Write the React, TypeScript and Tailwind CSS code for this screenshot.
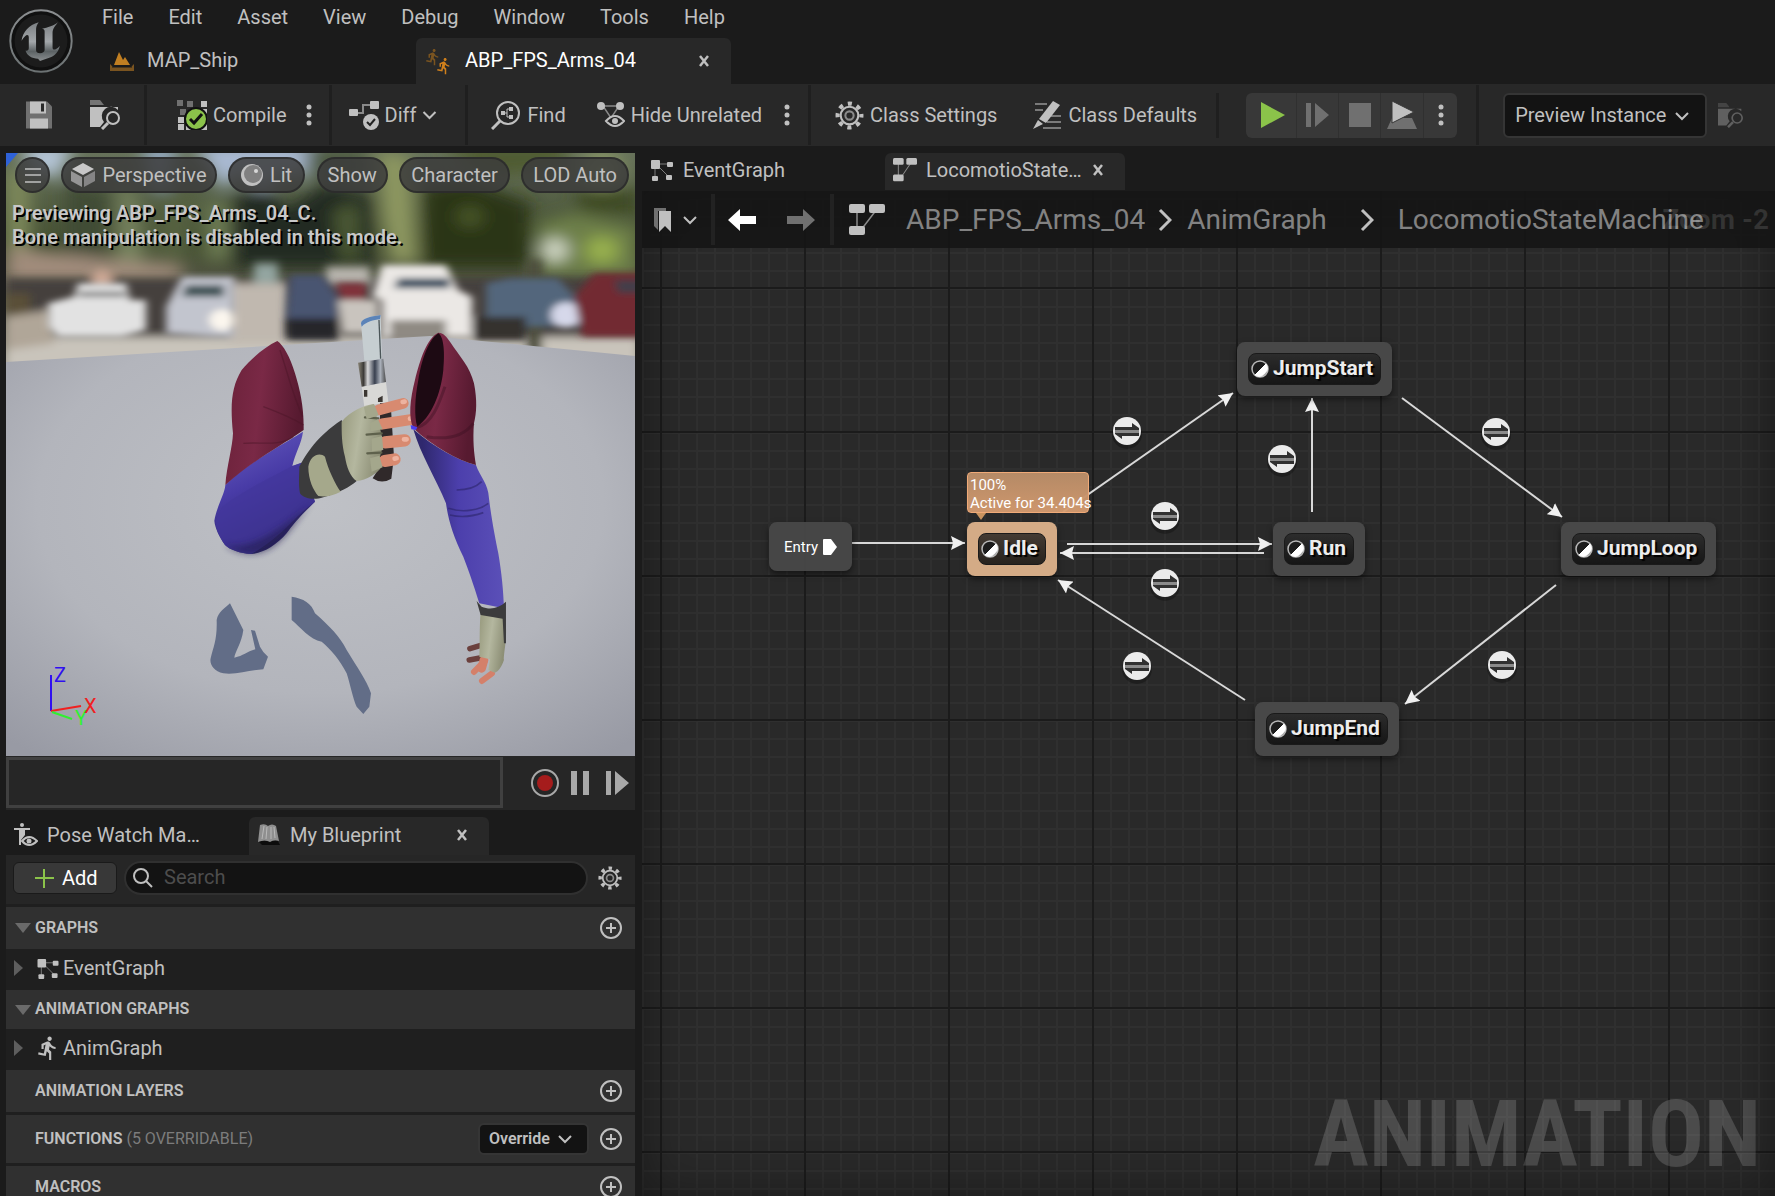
import * as React from "react";
import { MdDirectionsRun } from "react-icons/md";

type IconProps = { className?: string };

function UnrealLogo() {
  return (
    <svg viewBox="28 26 194 194" className="h-16 w-16" aria-label="Unreal">
      <defs>
        <linearGradient id="ring" x1="0" y1="0" x2="0" y2="1">
          <stop offset="0" stopColor="#8b8e90" />
          <stop offset="1" stopColor="#6c7273" />
        </linearGradient>
        <linearGradient id="letter" x1="0" y1="0" x2="0" y2="1">
          <stop offset="0" stopColor="#7b7f82" />
          <stop offset="0.5" stopColor="#a3a7aa" />
          <stop offset="0.75" stopColor="#5c6264" />
          <stop offset="1" stopColor="#8b8f91" />
        </linearGradient>
      </defs>
      <circle cx="125" cy="123" r="93" fill="#101010" stroke="url(#ring)" strokeWidth="6" />
      <circle cx="125" cy="123" r="80" fill="#1c1c1c" />
      <path
        fill="url(#letter)"
        d="M66 122C70 95 88 74 118 66C112 74 110 80 110 90V150C110 157 115 160 122 160C130 160 136 155 136 150V94C136 88 133 87 128 86C145 82 165 76 176 66C170 76 160 84 160 98V142C160 152 168 152 182 138C178 155 168 168 150 174L122 184L116 177C98 176 82 168 78 152C84 154 88 150 88 144V112C88 100 78 102 66 122Z"
      />
    </svg>
  );
}

function MapIcon({ className }: IconProps) {
  return (
    <svg viewBox="0 0 24 20" className={className}>
      <path d="M4 14L9 1L13 9L15 6L20 14Z" fill="#c17f22" />
      <path d="M0 13L3 16H21L24 13V20H0Z" fill="#7a5420" />
      <path d="M2 16H22" stroke="#1b1b1b" strokeWidth="1" />
    </svg>
  );
}

function SaveIcon() {
  return (
    <svg viewBox="0 0 26 27" className="h-7 w-[26px]">
      <path d="M0 0H21L26 5V27H0Z" fill="#707070" />
      <path d="M4 0H20V12H4Z" fill="#c0c0c0" />
      <path d="M15 2H18V10H15Z" fill="#282828" />
      <path d="M4 17H22V27H4Z" fill="#c0c0c0" />
    </svg>
  );
}

function BrowseIcon({ className }: IconProps) {
  return (
    <svg viewBox="0 0 30 30" className={className}>
      <path d="M0 5V0H10L14 5Z" fill="currentColor" opacity="0.5" />
      <path d="M0 7H28V10A9 9 0 0 0 14 22L10 27H0Z" fill="currentColor" />
      <circle cx="23" cy="18" r="6" fill="none" stroke="currentColor" strokeWidth="2" />
      <path d="M18 23L12 29" stroke="currentColor" strokeWidth="3" />
    </svg>
  );
}

function CompileIcon() {
  return (
    <svg viewBox="0 0 30 30" className="h-[30px] w-[30px]">
      <path d="M0 0H6V6H0ZM10 1H16V7H10ZM3 9H9V15H3Z" fill="#707070" />
      <path d="M24 1H30V7H24ZM12 9H18V15H12ZM24 9H30V15H24ZM1 17H7V23H1ZM1 24H7V30H1ZM9 24H15V30H9ZM24 24H30V30H24Z" fill="#c0c0c0" />
      <circle cx="19" cy="19" r="11" fill="#8bc34a" stroke="#111" strokeWidth="2" />
      <path d="M13 19L17 23L25 14" fill="none" stroke="#111" strokeWidth="3" />
    </svg>
  );
}

function DiffIcon() {
  return (
    <svg viewBox="0 0 30 29" className="h-[29px] w-[30px]">
      <path d="M8 12H14V4H22" fill="none" stroke="#8a8a8a" strokeWidth="2" />
      <rect x="0" y="8" width="9" height="7" rx="1" fill="#c0c0c0" />
      <rect x="21" y="0" width="9" height="8" rx="1" fill="#c0c0c0" />
      <circle cx="22" cy="21" r="8" fill="#c0c0c0" />
      <path d="M18 21L21 24L26 18" fill="none" stroke="#222" strokeWidth="2" />
    </svg>
  );
}

function FindIcon() {
  return (
    <svg viewBox="0 0 30 30" className="h-[30px] w-[30px]">
      <circle cx="17" cy="13" r="11" fill="none" stroke="#c0c0c0" strokeWidth="2" />
      <path d="M9 21L1 29" stroke="#c0c0c0" strokeWidth="3" />
      <path d="M14 13H16M20 9H16V17H20" fill="none" stroke="#c0c0c0" strokeWidth="1" />
      <path d="M10 11H14V15H10ZM18 7H22V11H18ZM18 15H22V19H18Z" fill="#c0c0c0" />
    </svg>
  );
}

function HideIcon() {
  return (
    <svg viewBox="0 0 28 26" className="h-[26px] w-7">
      <path d="M6 4H22L14 16Z" fill="none" stroke="#8a8a8a" strokeWidth="1.5" />
      <circle cx="4" cy="4" r="4" fill="#c0c0c0" />
      <circle cx="23" cy="4" r="4" fill="#c0c0c0" />
      <path d="M9 19Q18 9 27 19Q18 29 9 19Z" fill="#282828" stroke="#c0c0c0" strokeWidth="2" />
      <circle cx="18" cy="19" r="3" fill="#c0c0c0" />
    </svg>
  );
}

function GearIcon({ className }: IconProps) {
  return (
    <svg viewBox="0 0 28 28" className={className} fill="none" stroke="#c0c0c0">
      <circle cx="14" cy="14" r="8.5" strokeWidth="2" />
      <circle cx="14" cy="14" r="4" strokeWidth="2" stroke="#8a8a8a" />
      <circle cx="14" cy="14" r="11.5" strokeWidth="4" strokeDasharray="4 5.03" strokeDashoffset="2" />
    </svg>
  );
}

function DefaultsIcon() {
  return (
    <svg viewBox="0 0 29 28" className="h-7 w-[29px]">
      <path d="M2 3H14M2 9H10M18 15H28M14 21H28M10 27H28" stroke="#7a7a7a" strokeWidth="2" />
      <path d="M20 0L27 4L13 22L6 18Z" fill="#c0c0c0" />
      <path d="M5 19L10 23L0 28Z" fill="#c0c0c0" />
    </svg>
  );
}

function GraphIcon({ className }: IconProps) {
  return (
    <svg viewBox="0 0 22 22" className={className}>
      <path d="M5 5H18M4 5V18M6 6L18 18" stroke="#7d7d7d" strokeWidth="1" />
      <rect x="0" y="1" width="9" height="9" rx="1" fill="#c0c0c0" />
      <rect x="16" y="3" width="6" height="5" rx="1" fill="#c0c0c0" />
      <rect x="1" y="17" width="6" height="5" rx="1" fill="#c0c0c0" />
      <rect x="15" y="16" width="6" height="5" rx="1" fill="#c0c0c0" />
    </svg>
  );
}

function StateMachineIcon({ className }: IconProps) {
  return (
    <svg viewBox="0 0 36 32" preserveAspectRatio="none" className={className}>
      <path d="M8 5V26M28 5L12 26" stroke="#8a8a8a" strokeWidth="1.5" />
      <rect x="0" y="0" width="16" height="9" rx="2" fill="#c0c0c0" />
      <rect x="20" y="0" width="16" height="9" rx="2" fill="#c0c0c0" />
      <rect x="0" y="22" width="16" height="9" rx="2" fill="#c0c0c0" />
    </svg>
  );
}

function PoseIcon() {
  return (
    <svg viewBox="0 0 24 24" className="h-6 w-6">
      <circle cx="8" cy="2" r="2" fill="#c0c0c0" />
      <path d="M0 5H16V7H11V12L7 17V22H5V7H0Z" fill="#c0c0c0" />
      <path d="M8 18Q15 10 23 18Q15 26 8 18Z" fill="#1b1b1b" stroke="#c0c0c0" strokeWidth="2" />
      <circle cx="15" cy="18" r="2.5" fill="#c0c0c0" />
    </svg>
  );
}

function BookIcon() {
  return (
    <svg viewBox="0 0 24 24" className="h-6 w-6">
      <path d="M1 18H21L23 22H5Z" fill="#0c0c0c" />
      <path d="M3 2Q8 0 11 3Q15 0 19 3L22 18Q17 16 13 19Q8 16 1 19Z" fill="#8f8f8f" />
      <path d="M7 3L5 16M10 4L9 16M14 4V16M17 4L18 15" stroke="#b9b9b9" strokeWidth="1" />
    </svg>
  );
}

function Chevron({ className }: IconProps) {
  return (
    <svg viewBox="0 0 14 10" className={className} fill="none" stroke="currentColor" strokeWidth="2">
      <path d="M1 2L7 8L13 2" />
    </svg>
  );
}

function CloseIcon() {
  return (
    <svg viewBox="0 0 10 12" className="h-3 w-[10px]" stroke="#c0c0c0" strokeWidth="2.5">
      <path d="M1 1L9 11M9 1L1 11" />
    </svg>
  );
}

function Dots() {
  return (
    <svg viewBox="0 0 6 22" className="h-[22px] w-[6px]" fill="#c0c0c0">
      <circle cx="3" cy="3" r="2.5" />
      <circle cx="3" cy="11" r="2.5" />
      <circle cx="3" cy="19" r="2.5" />
    </svg>
  );
}

function PlusCircle() {
  return (
    <svg viewBox="0 0 22 22" className="h-[22px] w-[22px]" fill="none" stroke="#c0c0c0" strokeWidth="2">
      <circle cx="11" cy="11" r="10" />
      <path d="M11 6V16M6 11H16" />
    </svg>
  );
}

function ToolButton({ icon, label }: { icon: React.ReactNode; label: string }) {
  return (
    <button className="flex items-center gap-[6px] whitespace-nowrap">
      {icon}
      <span>{label}</span>
    </button>
  );
}

const menus = ["File", "Edit", "Asset", "View", "Debug", "Window", "Tools", "Help"];

function Header() {
  return (
    <header className="flex h-[84px]">
      <div className="w-[98px] shrink-0 pt-[9px] pl-[9px]">
        <UnrealLogo />
      </div>
      <div className="flex min-w-0 flex-1 flex-col justify-between">
        <nav className="-ml-[14px] flex h-[34px] items-center">
          {menus.map((m) => (
            <button key={m} className="pr-[17px] pl-[18px]">
              {m}
            </button>
          ))}
        </nav>
        <div className="flex h-[46px] gap-[3px]" role="tablist">
          <div role="tab" className="flex w-[315px] items-center gap-[13px] pb-3 pl-3">
            <MapIcon className="mt-3 h-5 w-6" />
            <span className="mt-[10px]">MAP_Ship</span>
          </div>
          <div
            role="tab"
            aria-selected="true"
            className="flex w-[315px] items-center gap-[13px] rounded-t-md bg-[#282828] pr-[22px] pl-3 text-white"
          >
            <span className="relative h-6 w-6 shrink-0">
              <MdDirectionsRun className="absolute -top-px -left-1 h-[18px] w-[18px] text-[#7a5420]" />
              <MdDirectionsRun className="absolute top-2 left-[7px] h-[18px] w-[18px] text-[#d0801c]" />
            </span>
            <span className="flex-1 pb-[2px]">ABP_FPS_Arms_04</span>
            <button aria-label="Close">
              <CloseIcon />
            </button>
          </div>
        </div>
      </div>
    </header>
  );
}

function Toolbar() {
  return (
    <div className="flex h-[64px] items-center border-b-2 border-[#1b1b1b] bg-[#282828]">
      <div className="flex h-[60px] items-center gap-[38px] border-r-3 border-[#1f1f1f] pr-6 pl-[26px]">
        <button aria-label="Save">
          <SaveIcon />
        </button>
        <button aria-label="Browse">
          <BrowseIcon className="h-[30px] w-[30px]" />
        </button>
      </div>
      <div className="flex h-[60px] items-center gap-[19px] border-r-3 border-[#1f1f1f] pr-[17px] pl-[30px]">
        <ToolButton icon={<CompileIcon />} label="Compile" />
        <button aria-label="Compile options">
          <Dots />
        </button>
      </div>
      <div className="flex h-[60px] items-center gap-[6px] border-r-3 border-[#1f1f1f] pr-7 pl-[17px]">
        <ToolButton icon={<DiffIcon />} label="Diff" />
        <Chevron className="h-[10px] w-[15px]" />
      </div>
      <div className="flex h-[60px] items-center border-r-3 border-[#1f1f1f] pr-[18px] pl-[23px]">
        <ToolButton icon={<FindIcon />} label="Find" />
        <div className="ml-[31px] flex gap-[22px]">
          <ToolButton icon={<HideIcon />} label="Hide Unrelated" />
          <button aria-label="Hide options">
            <Dots />
          </button>
        </div>
      </div>
      <div className="flex h-[45px] items-center gap-9 border-r-3 border-[#1f1f1f] pr-[19px] pl-6">
        <ToolButton icon={<GearIcon className="h-[29px] w-[29px]" />} label="Class Settings" />
        <ToolButton icon={<DefaultsIcon />} label="Class Defaults" />
      </div>
      <div className="flex h-[60px] items-center border-r-3 border-[#1f1f1f] pr-[19px] pl-[27px]">
        <div className="grid h-[45px] grid-cols-[51px_42px_42px_43px_33px] divide-x divide-[#303030] rounded-md bg-[#383838]">
          <button aria-label="Play" className="flex items-center justify-center pl-1">
            <svg viewBox="0 0 24 26" className="h-[26px] w-6">
              <path d="M0 0L24 13L0 26Z" fill="#8bc34a" />
            </svg>
          </button>
          <button aria-label="Step" className="flex items-center justify-center">
            <svg viewBox="0 0 24 24" className="h-6 w-6" fill="#707070">
              <path d="M0 0H5V24H0ZM9 0L23 12L9 24Z" />
            </svg>
          </button>
          <button aria-label="Stop" className="flex items-center justify-center">
            <span className="h-6 w-[22px] bg-[#707070]" />
          </button>
          <button aria-label="Eject" className="flex items-center justify-center">
            <svg viewBox="0 0 30 28" className="h-7 w-[30px]">
              <path d="M5 17H25L30 28H0Z" fill="#707070" />
              <path d="M5 0L27 11L5 22Z" fill="#c0c0c0" stroke="#383838" />
            </svg>
          </button>
          <button aria-label="Play options" className="flex items-center justify-center">
            <Dots />
          </button>
        </div>
      </div>
      <div className="flex items-center gap-[11px] pl-6">
        <div className="relative">
          <select
            aria-label="Debug object"
            className="h-[45px] w-[204px] appearance-none rounded-md border-2 border-[#353535] bg-[#131313] pl-[10px]"
          >
            <option>Preview Instance</option>
          </select>
          <Chevron className="pointer-events-none absolute top-[18px] right-[18px] h-[10px] w-[14px]" />
        </div>
        <button aria-label="Browse instance">
          <BrowseIcon className="h-[25px] w-[25px] text-[#606060]" />
        </button>
      </div>
    </div>
  );
}

function Scene() {
  return (
    <svg
      viewBox="6 153 629 603"
      preserveAspectRatio="xMidYMid slice"
      className="absolute inset-0 h-full w-full"
    >
      <defs>
        <linearGradient id="trees" x1="0" y1="0" x2="0" y2="1">
          <stop offset="0" stopColor="#66715a" />
          <stop offset="0.4" stopColor="#434e30" />
          <stop offset="0.6" stopColor="#565648" />
          <stop offset="1" stopColor="#a8a396" />
        </linearGradient>
        <radialGradient id="floor" cx="0.5" cy="0.4" r="0.75">
          <stop offset="0" stopColor="#bfc1c6" />
          <stop offset="0.6" stopColor="#b3b5bc" />
          <stop offset="1" stopColor="#989aa4" />
        </radialGradient>
        <linearGradient id="sleeve" x1="0" y1="0" x2="1" y2="0.2">
          <stop offset="0" stopColor="#6a2139" />
          <stop offset="0.5" stopColor="#7a2946" />
          <stop offset="1" stopColor="#571a30" />
        </linearGradient>
        <linearGradient id="fore" x1="0" y1="0" x2="0.4" y2="1">
          <stop offset="0" stopColor="#6a60c4" />
          <stop offset="0.5" stopColor="#483ba6" />
          <stop offset="1" stopColor="#2a2460" />
        </linearGradient>
        <linearGradient id="lower" x1="0" y1="0" x2="1" y2="0">
          <stop offset="0.1" stopColor="#2f286e" />
          <stop offset="0.5" stopColor="#4c3fac" />
          <stop offset="1" stopColor="#5b50b8" />
        </linearGradient>
        <linearGradient id="metal" x1="0" y1="0" x2="1" y2="0">
          <stop offset="0" stopColor="#8b8678" />
          <stop offset="0.2" stopColor="#3c3a38" />
          <stop offset="0.35" stopColor="#d8d8da" />
          <stop offset="0.6" stopColor="#39404f" />
          <stop offset="0.8" stopColor="#aab0ba" />
          <stop offset="1" stopColor="#4a4a4a" />
        </linearGradient>
        <linearGradient id="glove" x1="0" y1="0" x2="1" y2="0.3">
          <stop offset="0" stopColor="#97997d" />
          <stop offset="0.5" stopColor="#b4b79f" />
          <stop offset="1" stopColor="#8d8f76" />
        </linearGradient>
        <filter id="far" x="-20%" y="-20%" width="140%" height="140%">
          <feGaussianBlur stdDeviation="22" />
        </filter>
        <filter id="near" x="-20%" y="-20%" width="140%" height="140%">
          <feGaussianBlur stdDeviation="10" />
        </filter>
        <filter id="soft" x="-20%" y="-20%" width="140%" height="140%">
          <feGaussianBlur stdDeviation="12" />
        </filter>
      </defs>

      {/* blurred car park behind the floor */}
      <rect x="6" y="153" width="629" height="230" fill="url(#trees)" />
      <g transform="translate(6 150) scale(.4 .3333)">
        <g filter="url(#far)">
          <path d="M40 -20H170L130 90L60 60Z" fill="#b4c4d6" />
          <path d="M470 -20H770L740 90L690 60L640 150L600 60L540 120Z" fill="#a9b9d2" />
          <path d="M340 -20H430L400 130L360 100Z" fill="#91a5ba" />
          <path d="M0 60H60V300H0Z" fill="#7f8a5c" />
          <path d="M150 100L260 130L240 340H150Z" fill="#414b35" />
          <path d="M290 60L330 160L350 340H270Z" fill="#77835f" />
          <path d="M380 130L470 110L450 340H370Z" fill="#55613f" />
          <path d="M560 150L650 110L700 180L800 100L920 140V350H560Z" fill="#242c20" />
          <path d="M500 160H560V330H500Z" fill="#6d7b52" />
          <path d="M820 180L880 160V330H840Z" fill="#4e5b35" />
          <path d="M930 0L1010 20L1030 340H960L940 200Z" fill="#8d9760" />
          <path d="M740 0H900V90H780Z" fill="#4b583f" />
          <path d="M1040 110L1150 90L1310 160V350H1040Z" fill="#2b3619" />
          <path d="M1080 -20H1400V60L1200 80Z" fill="#4f5c30" />
          <path d="M1330 220L1420 190L1580 230V380H1330Z" fill="#6d7f48" />
          <path d="M1420 120H1580V190H1440Z" fill="#3c4922" />
          <circle cx="1490" cy="60" r="55" fill="#8c9a66" />
          <circle cx="1370" cy="300" r="34" fill="#d6dccb" />
          <circle cx="1490" cy="300" r="40" fill="#9ab34d" />
          <circle cx="1160" cy="200" r="30" fill="#4c5a2c" />
          <path d="M0 290L200 320L440 350V400H0Z" fill="#a18c7b" />
        </g>
        <g filter="url(#soft)">
          <path d="M0 385H1580V580H0Z" fill="#45413d" />
          <path d="M0 430H60V520L0 540Z" fill="#5a5038" />
          <path d="M0 560H1580V680H0Z" fill="#c9c4bb" />
          <path d="M560 400H700V580H560Z" fill="#c0b8af" />
          <path d="M0 500L110 480L120 580L0 600Z" fill="#b0a698" />
          <circle cx="240" cy="385" r="26" fill="#cda895" />
          <path d="M620 340H680V400H620Z" fill="#93a5a0" />
          <path d="M800 350H910V400H800Z" fill="#b8b5ae" />
          <path d="M1300 330H1340V620H1300Z" fill="#4d503e" />
        </g>
        <g filter="url(#near)">
          <path d="M180 400H300L310 450H350V540L290 560H130L105 530V460L170 440Z" fill="#e2e2e2" />
          <path d="M180 425H300V440H180Z" fill="#737373" />
          <path d="M440 380H570V560H520L400 550V470Z" fill="#c2c5ce" />
          <path d="M450 405H545V440H440Z" fill="#3f5257" />
          <circle cx="540" cy="510" r="32" fill="#fbf6ee" />
          <path d="M710 375H790L830 440V510H700Z" fill="#4a5571" />
          <path d="M700 505H830V570H700Z" fill="#26262c" />
          <path d="M825 400H900V450H840Z" fill="#80323a" />
          <path d="M830 450H930V550H840Z" fill="#c9c4be" />
          <path d="M940 345H1100L1130 420L1165 440V560H940V450L915 440Z" fill="#ebe8e5" />
          <path d="M980 385H1110V415H970Z" fill="#33465b" />
          <path d="M960 510H1100V570H960Z" fill="#8f8a83" />
          <path d="M1200 400L1260 385H1380L1430 450V530H1200Z" fill="#52667b" />
          <path d="M1170 500H1300V570H1170Z" fill="#35322f" />
          <circle cx="1400" cy="495" r="38" fill="#d6d8ea" />
          <path d="M1470 370H1600V560H1440L1420 440Z" fill="#722b33" />
          <path d="M1520 390H1600V430H1530Z" fill="#433e4a" />
        </g>
      </g>

      <path d="M6 362L430 336L635 356V756H6Z" fill="url(#floor)" />

      <g transform="translate(180 290) scale(.3333)">
        <g fill="#626d87">
          <path d="M150 940L190 1020C185 1060 165 1085 163 1103C190 1098 200 1085 226 1078L213 1020L225 1022L240 1070L250 1086L264 1100L250 1138C210 1140 170 1155 130 1150C100 1145 88 1120 92 1105C100 1070 112 1050 110 990C115 965 135 955 150 940Z" />
          <path d="M335 920C370 925 395 940 405 970C450 1010 480 1040 500 1080C530 1130 560 1170 573 1210L568 1250L550 1272L530 1250C520 1230 510 1180 500 1150C480 1110 450 1075 425 1055C390 1050 360 1010 335 990Z" />
        </g>

        {/* left arm */}
        <path d="M369 425C365 460 345 490 337 528L365 518L405 635C370 670 340 700 320 730C290 765 250 790 215 792C180 790 150 780 135 765C118 740 105 715 103 692C110 650 135 610 136 585C200 520 290 475 369 425Z" fill="url(#fore)" />
        <path d="M128 650C190 600 280 560 337 528L365 518L405 635C340 680 320 730 215 792C180 790 150 780 135 765C118 740 105 715 108 690Z" fill="#43379c" opacity="0.75" />
        <path d="M135 765C200 780 280 740 395 638C340 700 300 790 215 792C180 790 150 780 135 765Z" fill="#211c50" opacity="0.6" filter="url(#near)" />
        <path d="M292 153C310 165 330 200 345 250C360 300 372 350 371 420C300 470 220 510 136 585C140 530 158 470 159 430C150 340 155 290 185 240C215 205 255 170 292 153Z" fill="url(#sleeve)" />
        <path d="M250 350C290 365 330 380 371 405M190 460C240 455 300 470 340 440M300 180C320 240 340 320 368 380" stroke="#4b1528" strokeWidth="4" fill="none" opacity="0.5" />

        {/* knife */}
        <path d="M543 100C545 85 570 80 602 75L606 208L553 212Z" fill="#c6ced1" />
        <path d="M543 100C545 85 570 80 602 75L600 88C580 90 560 95 545 110Z" fill="#5b83b8" />
        <path d="M597 90L602 206" stroke="#4b5558" strokeWidth="4" />
        <path d="M545 290L618 276L625 335L553 350Z" fill="#d8d8d6" />
        <path d="M534 218L610 206L618 276L545 290Z" fill="url(#metal)" />
        <path d="M552 300H562V320H552ZM594 325L608 317V336H594Z" fill="#3b3632" />
        <path d="M600 340H632L642 500L634 566Q605 584 578 565L600 530Z" fill="#30292a" />

        {/* left glove */}
        <path d="M358 530C380 490 410 440 485 390L530 573C510 590 480 608 430 622C400 632 370 625 360 610C355 580 358 555 358 530Z" fill="#3b3b3c" />
        <path d="M485 395C510 365 550 345 582 342L590 380L600 415L606 440L608 470L600 500L605 530C590 552 560 570 530 573C510 560 500 530 495 500C485 460 485 430 485 395Z" fill="url(#glove)" />
        <path d="M385 530C390 495 420 485 435 500C445 540 465 580 482 605C460 617 435 622 415 618C400 600 385 570 385 530Z" fill="#a5a88b" />
        <path d="M595 385L555 382M605 430L560 434M604 488L562 490" stroke="#5e614c" strokeWidth="7" strokeLinecap="round" />
        <g stroke="#d88a70" strokeLinecap="round">
          <path d="M596 360L670 340" strokeWidth="32" />
          <path d="M606 402L692 389" strokeWidth="33" />
          <path d="M615 457L674 451" strokeWidth="37" />
          <path d="M614 513L644 508" strokeWidth="36" />
        </g>
        <g stroke="#edb3a0" strokeLinecap="round" strokeWidth="14">
          <path d="M668 336L674 335M690 386L698 386M672 448L680 448M644 506L650 505" />
        </g>
        <path d="M552 352L582 342L596 376L560 388ZM570 400L594 388L608 418L572 424ZM575 446L606 438L610 480L576 484ZM570 505L598 497L608 532L575 545Z" fill="#a4a78c" />

        {/* right arm */}
        <path d="M700 418C760 470 830 510 888 525C900 560 925 580 927 625C935 690 945 740 955 790C965 850 970 900 972 955L898 940C880 880 865 840 850 800C820 740 805 690 798 640C770 570 720 490 700 418Z" fill="url(#lower)" />
        <path d="M805 655C850 670 900 660 925 640M810 675C850 685 890 675 910 668M830 600C870 600 895 585 905 575" stroke="#231d5c" strokeWidth="5" fill="none" opacity="0.5" />
        <path d="M775 128C790 128 800 140 810 155C840 200 870 230 882 280C892 330 890 370 882 400C878 450 882 490 888 525C830 510 760 470 700 415C685 380 690 330 705 270C720 210 740 145 775 128Z" fill="url(#sleeve)" />
        <path d="M775 130C792 140 795 190 790 240C785 290 765 370 712 410C702 380 705 320 715 270C725 210 745 150 775 130Z" fill="#1d0a13" />
        <path d="M712 412C760 400 780 330 795 290M740 440C800 450 850 440 880 400" stroke="#3a0f20" strokeWidth="9" fill="none" opacity="0.4" />
        <path d="M692 405L712 412L708 420L694 418Z" fill="#4b3df0" />

        {/* right hand */}
        <g strokeLinecap="round" fill="none">
          <path d="M900 1067L870 1076M900 1104L868 1110" stroke="#6b403d" strokeWidth="17" />
          <path d="M915 1112L882 1146M936 1150L906 1173" stroke="#d4806a" strokeWidth="18" />
          <path d="M912 1110L905 1135" stroke="#d4806a" strokeWidth="26" />
        </g>
        <path d="M902 970L975 980C985 1040 970 1090 972 1110C965 1130 955 1145 945 1148L925 1140L930 1108L898 1100C900 1050 898 1010 902 970Z" fill="url(#glove)" />
        <path d="M890 933L905 950C930 960 955 956 978 935V1060L972 1060L968 986L902 975Z" fill="#3b3b3c" />
      </g>

      {/* axis gizmo */}
      <g strokeWidth="2" fontFamily="Roboto, sans-serif" fontSize="20">
        <path d="M51 711V675" stroke="#3010f0" />
        <path d="M51 711L81 706" stroke="#f02020" />
        <path d="M52 712L72 719" stroke="#30f030" />
        <text x="54" y="682" fill="#3010f0">Z</text>
        <text x="75" y="725" fill="#30f030">Y</text>
        <text x="84" y="713" fill="#f02020">X</text>
      </g>
      <path d="M6 153H18L6 167Z" fill="#2f62d8" />
    </svg>
  );
}

function Pill({ children, className }: { children: React.ReactNode; className: string }) {
  return (
    <button
      className={`flex h-9 items-center gap-[7px] rounded-full border-2 border-[#262626]/70 bg-[#3c3c3c]/85 whitespace-nowrap ${className}`}
    >
      {children}
    </button>
  );
}

function Viewport() {
  return (
    <section className="relative h-[603px] shrink-0 overflow-hidden">
      <Scene />
      <div className="relative flex justify-between py-1 pr-[6px] pl-[9px]">
        <Pill className="w-[35px] justify-center">
          <svg viewBox="0 0 16 16" className="h-4 w-4 shrink-0" stroke="#c0c0c0" strokeWidth="1.5" aria-label="Options">
            <path d="M0 2H16M0 8H16M0 15H16" />
          </svg>
        </Pill>
        <Pill className="px-2">
          <svg viewBox="0 0 24 24" className="h-6 w-6">
            <path d="M12 0L23 6L12 12L1 6Z" fill="#c8c8c8" />
            <path d="M0 8L11 14V24L0 18Z" fill="#959595" />
            <path d="M24 8L13 14V24L24 18Z" fill="#858585" />
          </svg>
          Perspective
        </Pill>
        <Pill className="px-[11px]">
          <svg viewBox="0 0 22 22" className="h-[22px] w-[22px]">
            <circle cx="11" cy="11" r="11" fill="#c0c0c0" />
            <circle cx="12" cy="10" r="9" fill="#808080" />
            <circle cx="15" cy="7" r="2" fill="#d8d8d8" />
          </svg>
          Lit
        </Pill>
        <Pill className="px-[9px]">Show</Pill>
        <Pill className="px-[10px]">Character</Pill>
        <Pill className="px-[10px]">LOD Auto</Pill>
      </div>
      <p className="relative pt-1 pl-[6px] leading-6 font-semibold text-[#c8c8c8] [text-shadow:2px_2px_0_#000]">
        Previewing ABP_FPS_Arms_04_C.
        <br />
        Bone manipulation is disabled in this mode.
      </p>
    </section>
  );
}

function Timeline() {
  return (
    <div className="flex h-[54px] shrink-0 items-start bg-[#262626] pt-px">
      <div className="h-[51px] flex-1 border-3 border-[#404040]" />
      <div className="flex h-[52px] items-center gap-3 pr-[6px] pl-7">
        <button aria-label="Record">
          <svg viewBox="0 0 28 28" className="h-7 w-7">
            <circle cx="14" cy="14" r="13" fill="none" stroke="#a8a8a8" strokeWidth="2" />
            <circle cx="14" cy="14" r="8" fill="#a51c1c" />
          </svg>
        </button>
        <button aria-label="Pause">
          <svg viewBox="0 0 19 24" className="h-6 w-[19px]" fill="#a8a8a8">
            <path d="M0 0H6V24H0ZM12 0H18V24H12Z" />
          </svg>
        </button>
        <button aria-label="Step forward" className="pl-1">
          <svg viewBox="0 0 23 24" className="h-6 w-[23px]" fill="#a8a8a8">
            <path d="M0 0H5V24H0ZM9 0L23 12L9 24Z" />
          </svg>
        </button>
      </div>
    </div>
  );
}

function Category({
  title,
  note,
  open,
  height,
  add = true,
  children,
}: {
  title: string;
  note?: string;
  open?: boolean;
  height: string;
  add?: boolean;
  children?: React.ReactNode;
}) {
  return (
    <div className={`flex shrink-0 items-center bg-[#303030] pr-[13px] pl-[9px] ${height}`}>
      <svg viewBox="0 0 16 10" className="h-[10px] w-4">
        {open && <path d="M0 0H16L8 10Z" fill="#6a6a6a" />}
      </svg>
      <h3 className="flex-1 pb-px pl-1 text-base font-semibold text-[#c0c0c0]">
        {title} {note && <span className="font-normal text-[#7c7c7c]">{note}</span>}
      </h3>
      {children}
      {add && (
        <button aria-label={`Add ${title}`}>
          <PlusCircle />
        </button>
      )}
    </div>
  );
}

function TreeRow({ icon, label }: { icon: React.ReactNode; label: string }) {
  return (
    <div className="flex h-[41px] shrink-0 items-center bg-[#1f1f1f] pb-[3px] pl-2">
      <svg viewBox="0 0 9 16" className="h-4 w-[9px]">
        <path d="M0 0L9 8L0 16Z" fill="#5e5e5e" />
      </svg>
      <span className="ml-3 flex w-[26px] justify-center">{icon}</span>
      <span className="pl-[2px]">{label}</span>
    </div>
  );
}

function MyBlueprint() {
  return (
    <>
      <div className="flex h-[45px] shrink-0 items-end" role="tablist">
        <div role="tab" className="flex h-[38px] w-[243px] items-center gap-[9px] pb-[3px] pl-2">
          <PoseIcon />
          <span>Pose Watch Ma…</span>
        </div>
        <div
          role="tab"
          aria-selected="true"
          className="flex h-[38px] w-60 items-center gap-[9px] rounded-t-md bg-[#282828] pr-[22px] pb-[3px] pl-2"
        >
          <BookIcon />
          <span className="flex-1">My Blueprint</span>
          <button aria-label="Close My Blueprint">
            <CloseIcon />
          </button>
        </div>
      </div>
      <section className="flex min-h-0 flex-1 flex-col overflow-hidden bg-[#1f1f1f]">
        <div className="mb-[3px] flex h-[49px] shrink-0 items-center bg-[#262626] pr-[13px] pb-[3px] pl-[7px]">
          <button className="flex h-8 w-[104px] items-center gap-2 rounded-md border border-[#1a1a1a] bg-[#383838] pl-[21px] text-white">
            <svg viewBox="0 0 19 19" className="h-[19px] w-[19px]" stroke="#8bc34a" strokeWidth="2">
              <path d="M9 0V19M0 9H19" />
            </svg>
            Add
          </button>
          <label className="mr-[10px] ml-[7px] flex h-[34px] flex-1 items-center rounded-full border-2 border-[#303030] bg-[#131313] pl-[7px]">
            <svg viewBox="0 0 20 20" className="h-5 w-5" fill="none" stroke="#c0c0c0" strokeWidth="2">
              <circle cx="8" cy="8" r="7" />
              <path d="M13 13L19 19" />
            </svg>
            <input
              aria-label="Search"
              placeholder="Search"
              className="min-w-0 flex-1 bg-transparent pb-[2px] pl-[11px] outline-none placeholder:text-[#4d4d4d]"
            />
          </label>
          <button aria-label="Settings">
            <GearIcon className="h-6 w-6" />
          </button>
        </div>
        <Category title="GRAPHS" height="h-[42px]" open />
        <TreeRow icon={<GraphIcon className="h-[21px] w-[22px]" />} label="EventGraph" />
        <Category title="ANIMATION GRAPHS" height="h-[39px]" add={false} open />
        <TreeRow icon={<MdDirectionsRun className="h-[26px] w-[26px]" />} label="AnimGraph" />
        <Category title="ANIMATION LAYERS" height="h-[42px]" />
        <div className="h-[3px] shrink-0" />
        <Category title="FUNCTIONS" note="(5 OVERRIDABLE)" height="h-12">
          <button className="mr-[11px] flex h-8 w-[111px] items-center gap-2 rounded-md border-2 border-[#353535] bg-[#131313] pl-[9px] text-base font-semibold">
            Override
            <Chevron className="h-[10px] w-[14px]" />
          </button>
        </Category>
        <div className="h-[3px] shrink-0" />
        <Category title="MACROS" height="h-[42px]" />
      </section>
    </>
  );
}

const states = [
  { name: "Idle", place: "left-[325px] top-[331px]", active: true },
  { name: "Run", place: "left-[631px] top-[331px]" },
  { name: "JumpStart", place: "left-[595px] top-[151px]" },
  { name: "JumpLoop", place: "left-[919px] top-[331px]" },
  { name: "JumpEnd", place: "left-[613px] top-[511px]" },
];

const wires = [
  [210, 352, 323, 352],
  [421, 321, 591, 202],
  [670, 321, 670, 207],
  [760, 207, 920, 326],
  [425, 353, 630, 353],
  [622, 362, 418, 362],
  [914, 394, 763, 513],
  [603, 509, 416, 389],
];

const transitions = [
  [485, 240],
  [640, 268],
  [854, 241],
  [523, 325],
  [523, 392],
  [495, 475],
  [860, 474],
];

function StateNode({ name, place, active }: { name: string; place: string; active?: boolean }) {
  return (
    <div
      className={`absolute rounded-lg p-[11px] shadow-[0_3px_6px_rgba(0,0,0,0.5)] ${place} ${
        active ? "bg-[#d4ab86]" : "bg-[#484848]"
      }`}
    >
      <div
        className={`flex h-8 items-center gap-1 rounded-lg border border-[#1a1a1a] bg-linear-to-b pr-[7px] pl-[2px] ${
          active ? "from-[#443b33] to-[#28231e]" : "from-[#2c2c2c] to-[#161616]"
        }`}
      >
        <svg viewBox="0 0 18 18" className="h-[18px] w-[18px]">
          <circle cx="9" cy="9" r="8" fill="#1c1c1c" stroke="#b8b8b8" strokeWidth="1.5" />
          <path d="M15 4A8 8 0 0 1 4 15Z" fill="#fff" stroke="#fff" />
        </svg>
        <span className="pb-px text-[21px] leading-none font-bold text-[#ededed] [text-shadow:2px_2px_1px_#000]">
          {name}
        </span>
      </div>
    </div>
  );
}

function GraphCanvas() {
  return (
    <>
      <svg className="absolute inset-0 h-full w-full">
        <defs>
          <pattern id="minor" x="18" y="97" width="18" height="18" patternUnits="userSpaceOnUse">
            <path d="M0 1H18M1 0V18" stroke="#2f2f2f" strokeWidth="2" />
          </pattern>
          <pattern id="major" x="18" y="96" width="144" height="144" patternUnits="userSpaceOnUse">
            <path d="M0 1H144M1 0V144" stroke="#1b1b1b" strokeWidth="2" />
          </pattern>
          <marker
            id="arrow"
            viewBox="0 0 14 14"
            refX="14"
            refY="7"
            markerWidth="14"
            markerHeight="14"
            markerUnits="userSpaceOnUse"
            orient="auto"
          >
            <path d="M0 0L14 7L0 14L2 7Z" fill="#f0f0f0" />
          </marker>
        </defs>
        <rect width="100%" height="100%" fill="#292929" />
        <rect width="100%" height="100%" fill="url(#minor)" />
        <rect width="100%" height="100%" fill="url(#major)" />
        <g stroke="#d8d8d8" strokeWidth="2">
          {wires.map(([x1, y1, x2, y2]) => (
            <line key={`${x1}-${y1}`} x1={x1} y1={y1} x2={x2} y2={y2} markerEnd="url(#arrow)" />
          ))}
        </g>
        {transitions.map(([x, y]) => (
          <g key={`${x}-${y}`} transform={`translate(${x} ${y})`}>
            <circle cy="3" r="15" fill="#000" opacity="0.25" />
            <circle r="14" fill="#ebebeb" />
            <path d="M-12 -1V-4H5V-8L12 -3V-1Z" fill="#303030" />
            <path d="M12 2V5H-5V8L-12 3V2Z" fill="#303030" />
            <path d="M-12 0.5H12" stroke="#8a8a8a" strokeWidth="3" />
          </g>
        ))}
      </svg>

      <div className="absolute top-[331px] left-[127px] flex h-[49px] w-[83px] items-center justify-center gap-[5px] rounded-lg bg-[#484848]/95 text-[15px] text-white shadow-[0_3px_6px_rgba(0,0,0,0.5)]">
        Entry
        <svg viewBox="0 0 14 16" className="h-4 w-[14px]">
          <path d="M1 0H8L14 8L8 16H1Q0 16 0 15V1Q0 0 1 0Z" fill="#fff" />
        </svg>
      </div>

      {states.map((s) => (
        <StateNode key={s.name} {...s} />
      ))}

      <div className="absolute top-[281px] left-[325px] h-[41px] w-[122px] rounded-sm border border-[#f0aa78] bg-linear-to-b from-[#b58a66] to-[#d69c70]/95 pt-[3px] pl-[2px] text-[15px] leading-[18px] whitespace-nowrap text-white">
        100%
        <br />
        Active for 34.404s
        <svg viewBox="0 0 10 7" className="absolute top-10 left-2 h-[7px] w-[10px]">
          <path d="M0 0H10L5 7Z" fill="#c9935f" />
        </svg>
      </div>

      <div className="pointer-events-none absolute right-[14px] bottom-[15px] font-['Roboto_Condensed',Roboto,sans-serif] text-[93px] leading-none font-bold text-white/16">
        ANIMATION
      </div>
      <div className="pointer-events-none absolute inset-0 shadow-[inset_0_0_50px_rgba(0,0,0,0.4)]" />
    </>
  );
}

function Crumb({ children }: { children: React.ReactNode }) {
  return (
    <a href="#graph" className="whitespace-nowrap">
      {children}
    </a>
  );
}

function CrumbArrow() {
  return (
    <svg viewBox="0 0 14 24" className="h-6 w-[14px] shrink-0" fill="none" stroke="#c0c0c0" strokeWidth="3">
      <path d="M2 2L12 12L2 22" />
    </svg>
  );
}

function Breadcrumbs() {
  return (
    <nav className="relative flex h-[57px] items-center bg-[#151515]/90 text-[28px] text-[#828282]">
      <button aria-label="Bookmarks" className="ml-3 flex items-center gap-3 text-[#c0c0c0]">
        <svg viewBox="0 0 17 24" className="h-6 w-[17px]">
          <path d="M0 0H12V3H4V22L0 18Z" fill="#707070" />
          <path d="M5 3H17V24L11 18L5 24Z" fill="#c0c0c0" />
        </svg>
        <Chevron className="h-[10px] w-[14px]" />
      </button>
      <div className="ml-[14px] h-[51px] w-1 bg-[#222]" />
      <button aria-label="Back" className="ml-[13px]">
        <svg viewBox="0 0 28 22" className="h-[22px] w-7">
          <path d="M0 11L12 0V7H28V15H12V22Z" fill="#fff" />
        </svg>
      </button>
      <button aria-label="Forward" className="ml-[31px]">
        <svg viewBox="0 0 28 22" className="h-[22px] w-7">
          <path d="M28 11L16 0V7H0V15H16V22Z" fill="#707070" />
        </svg>
      </button>
      <div className="ml-[15px] h-[51px] w-1 bg-[#222]" />
      <StateMachineIcon className="mr-[21px] ml-[15px] h-8 w-9 shrink-0" />
      <Crumb>ABP_FPS_Arms_04</Crumb>
      <div className="mr-[15px] ml-[13px]">
        <CrumbArrow />
      </div>
      <Crumb>AnimGraph</Crumb>
      <div className="mr-6 ml-[33px]">
        <CrumbArrow />
      </div>
      <Crumb>LocomotioStateMachine</Crumb>
      <span className="pointer-events-none absolute right-[6px] font-bold text-white/12">Zoom -2</span>
    </nav>
  );
}

function GraphPanel() {
  return (
    <main className="flex min-w-0 flex-col">
      <div className="flex h-[43px] shrink-0 items-end pb-px" role="tablist">
        <div role="tab" className="flex h-[37px] w-[243px] items-center gap-[10px] pb-[3px] pl-[9px]">
          <GraphIcon className="h-[22px] w-[22px]" />
          <span>EventGraph</span>
        </div>
        <div
          role="tab"
          aria-selected="true"
          className="flex h-[37px] w-60 items-center gap-[9px] rounded-t-md bg-[#282828] pr-[22px] pb-[3px] pl-2"
        >
          <StateMachineIcon className="h-6 w-6" />
          <span className="flex-1 whitespace-nowrap">LocomotioState…</span>
          <button aria-label="Close graph">
            <CloseIcon />
          </button>
        </div>
      </div>
      <div className="relative min-h-0 flex-1 overflow-hidden">
        <GraphCanvas />
        <Breadcrumbs />
      </div>
    </main>
  );
}

export default function App() {
  return (
    <div className="flex h-screen flex-col overflow-hidden bg-[#1b1b1b] font-[Roboto,sans-serif] text-[20px] leading-6 text-[#c0c0c0]">
      <Header />
      <Toolbar />
      <div className="grid min-h-0 flex-1 grid-cols-[629fr_1133fr] grid-rows-1 gap-[7px] pl-[6px]">
        <div className="flex min-h-0 min-w-0 flex-col pt-[5px]">
          <Viewport />
          <Timeline />
          <MyBlueprint />
        </div>
        <GraphPanel />
      </div>
    </div>
  );
}
